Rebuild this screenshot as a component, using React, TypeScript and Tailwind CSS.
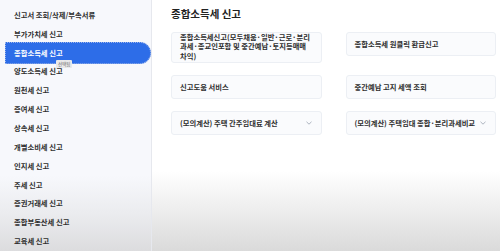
const menu = [
  '신고서 조회/삭제/부속서류',
  '부가가치세 신고',
  '종합소득세 신고',
  '양도소득세 신고',
  '원천세 신고',
  '증여세 신고',
  '상속세 신고',
  '개별소비세 신고',
  '인지세 신고',
  '주세 신고',
  '증권거래세 신고',
  '종합부동산세 신고',
  '교육세 신고',
]

function Chevron() {
  return (
    <svg width="6" height="4" viewBox="0 0 6 4" className="shrink-0 text-gray-400">
      <path d="M0.5 0.8 L3 3.2 L5.5 0.8" fill="none" stroke="currentColor" strokeWidth="0.8" />
    </svg>
  )
}

function Card({ children, select = false, className = '' }: { children: React.ReactNode; select?: boolean; className?: string }) {
  return (
    <div
      className={`flex items-center justify-between rounded-[3px] border border-[#eceff4] bg-[#fafbfd] pl-[8px] pr-[9px] text-[7.3px] font-semibold text-[#2e2e2e] ${className}`}
    >
      <div>{children}</div>
      {select && <Chevron />}
    </div>
  )
}

export default function App() {
  return (
    <div
      className="flex h-[251px] w-[500px] overflow-hidden bg-[linear-gradient(to_bottom,#ffffff_0%,#ffffff_68%,#ececec_85%,#dadada_100%)]"
      style={{ fontFamily: '"Noto Sans CJK KR", "Noto Sans", sans-serif' }}
    >
      <aside className="flex w-[152px] shrink-0 flex-col border-r border-[#e6e8ee] bg-[linear-gradient(to_bottom,#f7f8fc_0%,#f7f8fc_70%,#eaebee_86%,#dcdcde_100%)] pt-[6px]">
        {menu.map((item) => {
          const active = item === '종합소득세 신고'
          return active ? (
            <div
              key={item}
              className="relative -my-[1.5px] ml-[5px] flex h-[22px] items-center rounded-r-full border border-dotted border-[#9cb4e8] bg-[#2d6de8] pl-[8px] text-[7.3px] font-bold text-white"
            >
              {item}
              <span className="absolute left-[50px] top-[17px] rounded-[1px] bg-[#e9e9ea] px-[2px] text-[4.5px] leading-[8px] font-normal text-[#666]">
                선택됨
              </span>
            </div>
          ) : (
            <div key={item} className="flex h-[19px] items-center pl-[14px] text-[7.3px] font-semibold text-[#2e2e2e]">
              {item}
            </div>
          )
        })}
      </aside>
      <main className="flex-1 pl-[19px] pr-[4px]">
        <h1 className="pt-[6px] text-[10.5px] leading-[16px] font-bold text-[#222]">종합소득세 신고</h1>
        <div className="mt-[10px] grid w-[325px] grid-cols-2 items-start gap-x-[24px] gap-y-[12px]">
          <Card className="h-[31px] leading-[9.6px] pb-[1px]">
            종합소득세신고(모두채움·일반·근로·분리
            <br />
            과세·종교인포함 및 중간예납·토지등매매
            <br />
            차익)
          </Card>
          <Card className="h-[24px]">종합소득세 원클릭 환급신고</Card>
          <Card className="h-[24px]">신고도움 서비스</Card>
          <Card className="h-[24px]">중간예납 고지 세액 조회</Card>
          <Card className="h-[24px]" select>
            (모의계산) 주택 간주임대료 계산
          </Card>
          <Card className="h-[24px]" select>
            (모의계산) 주택임대 종합·분리과세비교
          </Card>
        </div>
      </main>
    </div>
  )
}
